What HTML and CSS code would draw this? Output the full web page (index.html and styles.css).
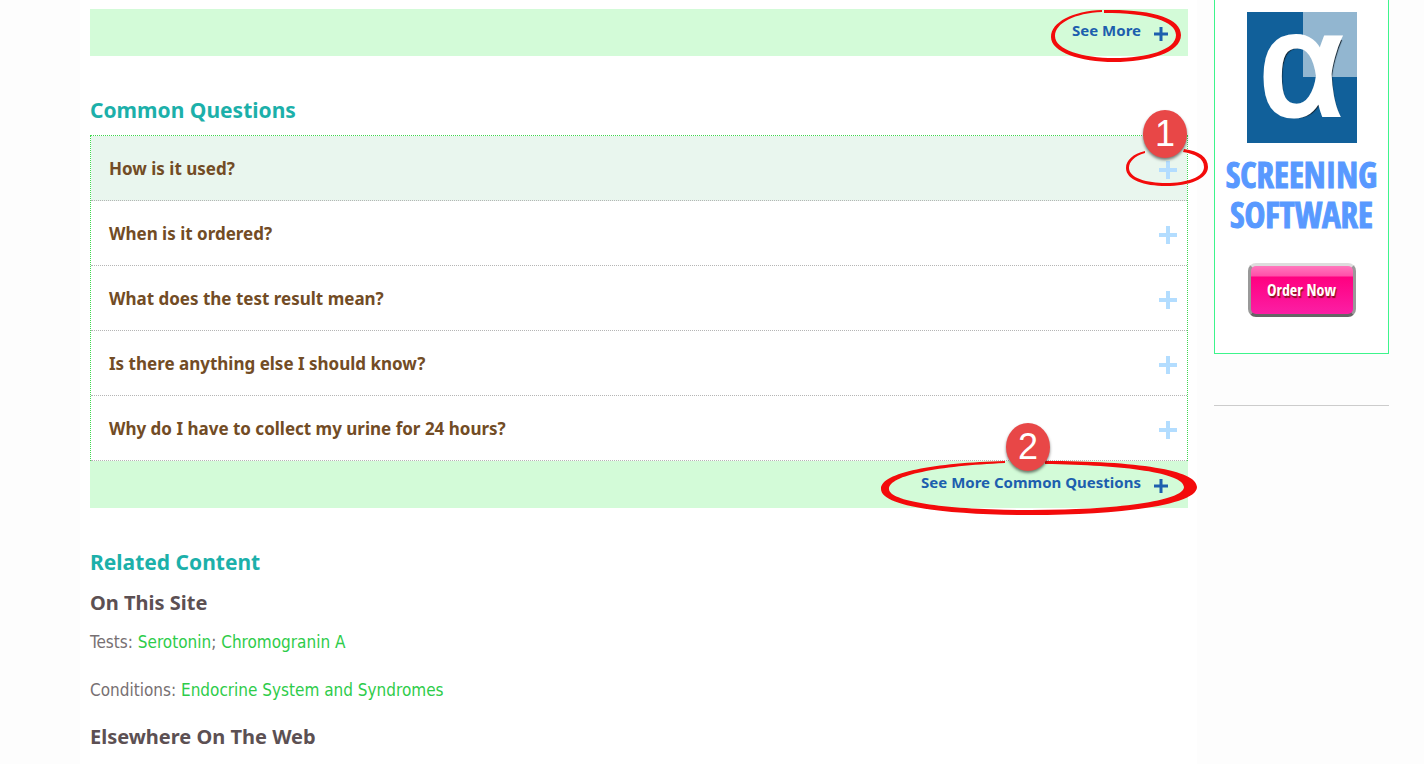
FILE: index.html
```html
<!DOCTYPE html>
<html lang="en">
<head>
  <meta charset="UTF-8">
  <meta name="viewport" content="width=device-width, initial-scale=1.0">
  <title>Common Questions</title>
  <link rel="stylesheet" href="styles.css">
</head>
<body>
  <div class="page">
    <main class="content">
      <div class="more-bar">
        <a href="#more" class="more-link">See More
          <svg class="plus-small" viewBox="0 0 14 14"><path d="M7 0v14M0 7h14"/></svg>
        </a>
        <svg class="ring ring-more" viewBox="0 0 130 54">
          <path d="M51 3C24 4 4 14 4 27c0 14 28 22 59 22 33 0 62-8 62-23C125 12 98 4 53 4L53 1C101 0 130 9 130 26c0 18-33 27-67 27C29 53 0 43 0 28 0 13 22 2 51 1z"/>
        </svg>
      </div>

      <h2>Common Questions</h2>
      <ul class="questions">
        <li class="active">
          <button type="button">How is it used?
            <svg class="plus" viewBox="0 0 18 18"><path d="M9 0v18M0 9h18"/></svg>
          </button>
          <svg class="ring ring-one" viewBox="0 0 82 39">
            <path d="M19 5C8 8 3 14 3 20c0 10 18 15 37 15 21 0 38-6 38-16 0-9-9-13-21-15l1-3c15 2 24 8 24 18 0 12-19 19-42 19C18 38 0 32 0 20 0 12 7 6 19 3z"/>
          </svg>
          <span class="badge badge-one">1</span>
        </li>
        <li>
          <button type="button">When is it ordered?
            <svg class="plus" viewBox="0 0 18 18"><path d="M9 0v18M0 9h18"/></svg>
          </button>
        </li>
        <li>
          <button type="button">What does the test result mean?
            <svg class="plus" viewBox="0 0 18 18"><path d="M9 0v18M0 9h18"/></svg>
          </button>
        </li>
        <li>
          <button type="button">Is there anything else I should know?
            <svg class="plus" viewBox="0 0 18 18"><path d="M9 0v18M0 9h18"/></svg>
          </button>
        </li>
        <li>
          <button type="button">Why do I have to collect my urine for 24 hours?
            <svg class="plus" viewBox="0 0 18 18"><path d="M9 0v18M0 9h18"/></svg>
          </button>
        </li>
      </ul>
      <div class="more-bar">
        <a href="#questions" class="more-link">See More Common Questions
          <svg class="plus-small" viewBox="0 0 14 14"><path d="M7 0v14M0 7h14"/></svg>
        </a>
        <svg class="ring ring-two" viewBox="0 0 316 55">
          <path d="M124 3C58 6 8 15 8 29c0 13 60 21 142 21 84 0 153-9 153-23 0-14-59-22-139-23l0-3c92 0 152 9 152 26 0 18-76 28-166 28C62 55 0 46 0 29 0 12 54 3 124 1z"/>
        </svg>
        <span class="badge badge-two">2</span>
      </div>

      <h2>Related Content</h2>
      <h3>On This Site</h3>
      <p>Tests: <a href="#serotonin">Serotonin</a>; <a href="#chromogranin">Chromogranin A</a></p>
      <p>Conditions: <a href="#endocrine">Endocrine System and Syndromes</a></p>
      <h3>Elsewhere On The Web</h3>
    </main>

    <aside class="sidebar">
      <div class="ad">
        <div class="ad-logo"><span>α</span></div>
        <div class="ad-title">SCREENING<br>SOFTWARE</div>
        <button type="button" class="order">Order Now</button>
      </div>
      <hr>
    </aside>
  </div>
</body>
</html>
```
FILE: styles.css
```css
* {
  box-sizing: border-box;
}

body {
  margin: 0;
  background: #fdfdfd;
  color: #777072;
  font-family: "DejaVu Sans Condensed", "Noto Sans", sans-serif;
  font-size: 17px;
}

.page {
  display: flex;
  align-items: flex-start;
  min-height: 100vh;
  padding: 0 35px 0 80px;
}

.content {
  flex: 1;
  min-height: 100vh;
  padding: 9px 9px 0 10px;
  background: #fff;
}

h2 {
  margin: 39px 0 10px;
  font-family: "Noto Sans", sans-serif;
  font-size: 21px;
  line-height: 30px;
  color: #1cb0aa;
}

h3 {
  margin: 0;
  font-family: "Noto Sans", sans-serif;
  font-size: 20px;
  line-height: 32px;
  color: #5c5053;
}

p {
  margin: 0;
  padding: 11px 0 13px;
  line-height: 24px;
}

p + h3 {
  margin-top: 6px;
}

p a {
  color: #2ecc4a;
  text-decoration: none;
}

/* green bars */
.more-bar {
  position: relative;
  display: flex;
  justify-content: flex-end;
  height: 47px;
  padding-right: 20px;
  background: #d3fbd8;
}

.more-link {
  display: flex;
  gap: 13px;
  font-family: "Noto Sans", sans-serif;
  font-size: 15px;
  font-weight: bold;
  line-height: 43px;
  color: #1d5fae;
  text-decoration: none;
}

.plus-small {
  width: 14px;
  height: 14px;
  margin-top: 18px;
  stroke: #1d5fae;
  stroke-width: 3;
}

/* question list */
.questions {
  margin: 0;
  padding: 0;
  list-style: none;
  border: 1px dotted #3fd84f;
  border-bottom: 0;
}

.questions li {
  position: relative;
  border-bottom: 1px dotted #b5b5b5;
}

.questions .active {
  background: #e9f6ee;
}

.questions button {
  display: flex;
  align-items: center;
  justify-content: space-between;
  width: 100%;
  height: 64px;
  padding: 0 10px 0 18px;
  border: 0;
  background: none;
  font-family: "Noto Sans", sans-serif;
  font-size: 17px;
  font-weight: bold;
  color: #724c25;
  text-align: left;
  cursor: pointer;
}

.plus {
  width: 18px;
  height: 18px;
  margin-top: 3px;
  stroke: #b3ddff;
  stroke-width: 4;
}

/* red rings and numbers over the list */
.ring {
  position: absolute;
  fill: #f30b0b;
  pointer-events: none;
}

.ring-more {
  top: 0;
  right: 7px;
  width: 130px;
  height: 54px;
}

.ring-one {
  top: 12px;
  right: -21px;
  width: 82px;
  height: 39px;
}

.ring-two {
  top: -1px;
  right: -9px;
  width: 316px;
  height: 55px;
}

.badge {
  position: absolute;
  z-index: 1;
  width: 44px;
  height: 48px;
  border-radius: 50%;
  background: #e84747;
  box-shadow: 0 2px 3px rgba(0, 0, 0, 0.5);
  font-family: "Liberation Sans", sans-serif;
  font-size: 36px;
  line-height: 48px;
  color: #fff;
  text-align: center;
}

.badge-one {
  top: -26px;
  right: 0;
}

.badge-two {
  top: -38px;
  right: 138px;
}

/* sidebar */
.sidebar {
  width: 175px;
  margin-left: 17px;
}

.ad {
  display: flex;
  flex-direction: column;
  align-items: center;
  padding: 12px 0 36px;
  border: 1px solid #3df58c;
  border-top: 0;
  background: #fff;
}

.ad-logo {
  display: flex;
  align-items: center;
  justify-content: center;
  width: 110px;
  height: 131px;
  background: linear-gradient(#92b6d0, #92b6d0) top right / 54px 65px no-repeat #11609a;
}

.ad-logo span {
  padding-bottom: 24px;
  font-family: "Liberation Sans", sans-serif;
  font-size: 144px;
  line-height: 80px;
  color: #fff;
  text-shadow: 3px 2px 1px #10202c;
  -webkit-text-stroke: 5px #fff;
}

.ad-title {
  margin-top: 12px;
  font-family: "Open Sans Condensed", "Open Sans", sans-serif;
  font-size: 35px;
  font-weight: bold;
  line-height: 40px;
  color: #5899ff;
  text-align: center;
  -webkit-text-stroke: 1px #5899ff;
}

.order {
  width: 108px;
  height: 54px;
  margin-top: 28px;
  padding: 0;
  border: 3px solid;
  border-color: #ddd #999 #666 #999;
  border-radius: 8px;
  background: linear-gradient(#ff78bd, #ff4fa9 10px, #ff0080 11px, #fb1fa5);
  font-family: "Open Sans Condensed", "Open Sans", sans-serif;
  font-size: 16px;
  font-weight: bold;
  color: #fff;
  text-shadow: 1px 2px 1px #8e1220;
}

hr {
  margin: 51px 0 0;
  border: 0;
  border-top: 1px solid #ccc;
}
```
